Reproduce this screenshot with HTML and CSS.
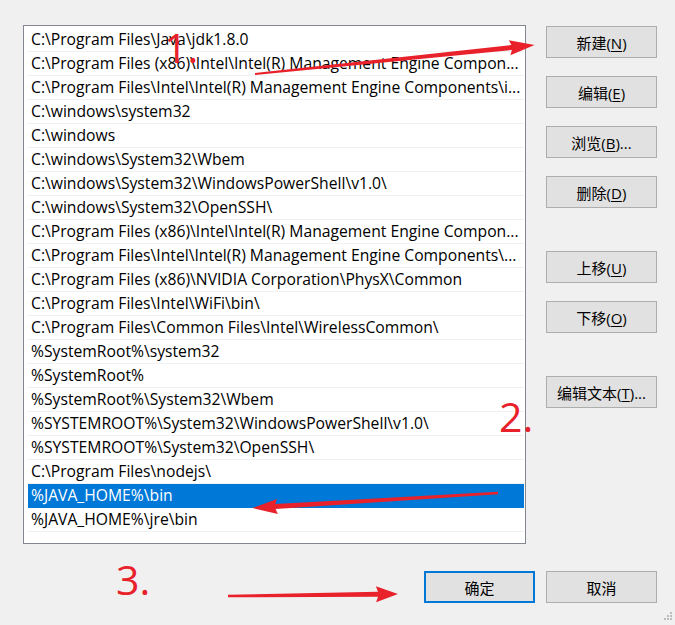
FILE: index.html
```html
<!DOCTYPE html>
<html lang="zh-CN">
<head>
<meta charset="utf-8">
<title>编辑环境变量</title>
<link rel="stylesheet" href="styles.css">
</head>
<body>
<div class="dialog">
  <div class="main">
    <div class="list">
      <div class="row">C:\Program Files\Java\jdk1.8.0</div>
      <div class="row">C:\Program Files (x86)\Intel\Intel(R) Management Engine Compon...</div>
      <div class="row">C:\Program Files\Intel\Intel(R) Management Engine Components\i...</div>
      <div class="row">C:\windows\system32</div>
      <div class="row">C:\windows</div>
      <div class="row">C:\windows\System32\Wbem</div>
      <div class="row">C:\windows\System32\WindowsPowerShell\v1.0\</div>
      <div class="row">C:\windows\System32\OpenSSH\</div>
      <div class="row">C:\Program Files (x86)\Intel\Intel(R) Management Engine Compon...</div>
      <div class="row">C:\Program Files\Intel\Intel(R) Management Engine Components\...</div>
      <div class="row">C:\Program Files (x86)\NVIDIA Corporation\PhysX\Common</div>
      <div class="row">C:\Program Files\Intel\WiFi\bin\</div>
      <div class="row">C:\Program Files\Common Files\Intel\WirelessCommon\</div>
      <div class="row">%SystemRoot%\system32</div>
      <div class="row">%SystemRoot%</div>
      <div class="row">%SystemRoot%\System32\Wbem</div>
      <div class="row">%SYSTEMROOT%\System32\WindowsPowerShell\v1.0\</div>
      <div class="row">%SYSTEMROOT%\System32\OpenSSH\</div>
      <div class="row">C:\Program Files\nodejs\</div>
      <div class="row selected">%JAVA_HOME%\bin</div>
      <div class="row">%JAVA_HOME%\jre\bin</div>
    </div>
    <div class="side">
      <div class="group">
        <button class="btn">新建(<u>N</u>)</button>
        <button class="btn">编辑(<u>E</u>)</button>
        <button class="btn">浏览(<u>B</u>)...</button>
        <button class="btn">删除(<u>D</u>)</button>
      </div>
      <div class="group">
        <button class="btn">上移(<u>U</u>)</button>
        <button class="btn">下移(<u>O</u>)</button>
      </div>
      <div class="group">
        <button class="btn">编辑文本(<u>T</u>)...</button>
      </div>
    </div>
  </div>
  <div class="footer">
    <button class="btn default">确定</button>
    <button class="btn">取消</button>
  </div>
</div>

<svg class="grip" width="10" height="10" viewBox="0 0 10 10">
  <rect x="7" y="0" width="2" height="2"/>
  <rect x="4" y="3" width="2" height="2"/><rect x="7" y="3" width="2" height="2"/>
  <rect x="1" y="6" width="2" height="2"/><rect x="4" y="6" width="2" height="2"/><rect x="7" y="6" width="2" height="2"/>
</svg>

<svg class="notes" width="675" height="625" viewBox="0 0 675 625">
  <text class="num" x="164" y="63">1.</text>
  <text class="num" x="499" y="432">2.</text>
  <text class="num" x="116" y="595">3.</text>
  <g transform="translate(255 74) rotate(-5.9)">
    <polygon points="0,-1 258,-2.5 256,-7.5 281,0 256,7.5 258,2.5 0,1"/>
  </g>
  <g transform="translate(498 493) rotate(176.5)">
    <polygon points="0,-1.2 223,-2.5 221,-7.5 246,0 221,7.5 223,2.5 0,1.2"/>
  </g>
  <g transform="translate(228 596) rotate(-0.7)">
    <polygon points="0,-1.3 150,-2.5 148,-8 170,0 148,8 150,2.5 0,1.3"/>
  </g>
</svg>
</body>
</html>
```

FILE: styles.css
```css
html, body {
  margin: 0;
  padding: 0;
  background: #f0f0f0;
}

body {
  width: 675px;
  height: 625px;
  overflow: hidden;
  position: relative;
  font-family: "Open Sans", "Noto Sans CJK SC", sans-serif;
  color: #000;
}

.dialog {
  padding: 25px 18px 0 23px;
}

.main {
  display: flex;
  gap: 20px;
}

.list {
  box-sizing: border-box;
  width: 504px;
  height: 519px;
  border: 1px solid #828790;
  background: #fff;
  padding: 2px 1px 0 4px;
  overflow: hidden;
}

.row {
  box-sizing: border-box;
  height: 24px;
  line-height: 23px;
  padding-left: 3px;
  border-bottom: 1px solid #f1f1f1;
  font-size: 15.7px;
  white-space: nowrap;
  overflow: hidden;
  text-overflow: ellipsis;
}

.row.selected {
  background: #0078d7;
  color: #fff;
  border-bottom-color: #0078d7;
}

.side {
  display: flex;
  flex-direction: column;
  gap: 43px;
  padding-top: 1px;
}

.group {
  display: flex;
  flex-direction: column;
  gap: 18px;
}

.btn {
  box-sizing: border-box;
  width: 111px;
  height: 32px;
  margin: 0;
  padding: 0;
  background: #e1e1e1;
  border: 1px solid #adadad;
  border-radius: 0;
  font-family: "Open Sans", "Noto Sans CJK SC", sans-serif;
  font-size: 15px;
  color: #000;
  text-align: center;
}

.btn u {
  text-decoration-thickness: 1px;
  text-underline-offset: 2px;
}

.btn.default {
  border: 2px solid #0078d7;
}

.footer {
  display: flex;
  justify-content: flex-end;
  gap: 11px;
  margin-top: 27px;
}

.grip {
  position: absolute;
  right: 2px;
  bottom: 3px;
  fill: #bcbcbc;
}

.notes {
  position: absolute;
  left: 0;
  top: 0;
  pointer-events: none;
  fill: #e8212b;
}

.num {
  font-family: "Open Sans", sans-serif;
  font-size: 41px;
  font-weight: 400;
}
```
